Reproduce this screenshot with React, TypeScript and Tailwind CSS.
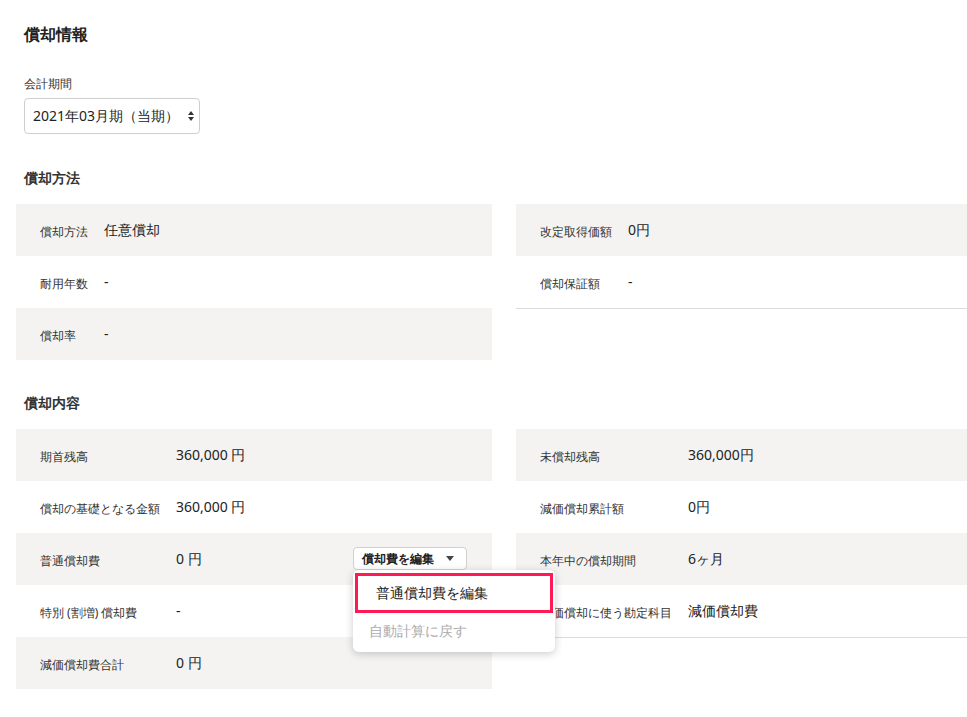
import { ChevronDown } from "lucide-react";

type Row = { label: string; value: string; extra?: boolean };

function Table({ rows, labelW, border }: { rows: Row[]; labelW: string; border?: boolean }) {
  return (
    <div className={border ? "border-b border-[#dcdcdc]" : ""}>
      {rows.map((r, i) => (
        <div
          key={r.label}
          className={`relative flex h-[52px] items-center px-6 ${i % 2 === 0 ? "bg-[#f4f3f1]" : "bg-white"}`}
        >
          <div className={`${labelW} shrink-0 pt-1 text-xs text-[#333]`}>{r.label}</div>
          <div className="text-sm text-[#222]">{r.value}</div>
          {r.extra && <EditMenu />}
        </div>
      ))}
    </div>
  );
}

function EditMenu() {
  return (
    <div className="absolute left-[337px] top-[14px] z-10">
      <button className="flex h-[23px] w-[114px] items-center gap-3 rounded border border-[#d0d0d0] bg-white pl-2 text-xs font-bold text-[#222]">
        償却費を編集
        <svg width="8" height="5" viewBox="0 0 8 5"><path d="M0 0h8L4 5z" fill="#444" /></svg>
      </button>
      <div className="w-[202px] rounded-md bg-white py-[3px] shadow-[0_2px_8px_rgba(0,0,0,0.2)]">
        <div className="mx-[2px] flex h-[40px] items-center border-[3px] border-[#ff1a55] pl-[18px] text-sm text-[#222]">
          普通償却費を編集
        </div>
        <div className="flex h-[36px] items-center pl-4 text-sm text-[#aaa]">自動計算に戻す</div>
      </div>
    </div>
  );
}

export default function App() {
  return (
    <div className="min-h-screen bg-white pt-[22px] pl-4 font-['Noto_Sans_CJK_JP','Noto_Sans',sans-serif]">
      <h1 className="pl-2 text-base font-bold text-[#222]">償却情報</h1>
      <div className="mt-[30px] pl-2 text-xs text-[#333]">会計期間</div>
      <div className="ml-2 mt-[6px] flex h-[36px] w-[176px] items-center justify-between rounded border border-[#cfcfcf] pl-2 pr-[5px] text-sm text-[#222]">
        2021年03月期（当期）
        <svg width="6" height="10" viewBox="0 0 6 10"><path d="M0 4h6L3 0zM0 6h6L3 10z" fill="#333" /></svg>
      </div>

      <h2 className="mt-[34px] pl-2 text-sm font-bold text-[#333]">償却方法</h2>
      <div className="mt-[16px] flex gap-6">
        <div className="w-[476px]">
          <Table labelW="w-16" rows={[
            { label: "償却方法", value: "任意償却" },
            { label: "耐用年数", value: "-" },
            { label: "償却率", value: "-" },
          ]} />
        </div>
        <div className="flex-1">
          <Table labelW="w-[88px]" border rows={[
            { label: "改定取得価額", value: "0円" },
            { label: "償却保証額", value: "-" },
          ]} />
        </div>
      </div>

      <h2 className="mt-[33px] pl-2 text-sm font-bold text-[#333]">償却内容</h2>
      <div className="mt-[16px] flex gap-6">
        <div className="w-[476px]">
          <Table labelW="w-[136px]" rows={[
            { label: "期首残高", value: "360,000 円" },
            { label: "償却の基礎となる金額", value: "360,000 円" },
            { label: "普通償却費", value: "0 円", extra: true },
            { label: "特別 (割増) 償却費", value: "-" },
            { label: "減価償却費合計", value: "0 円" },
          ]} />
        </div>
        <div className="flex-1">
          <Table labelW="w-[148px]" border rows={[
            { label: "未償却残高", value: "360,000円" },
            { label: "減価償却累計額", value: "0円" },
            { label: "本年中の償却期間", value: "6ヶ月" },
            { label: "減価償却に使う勘定科目", value: "減価償却費" },
          ]} />
        </div>
      </div>
    </div>
  );
}
